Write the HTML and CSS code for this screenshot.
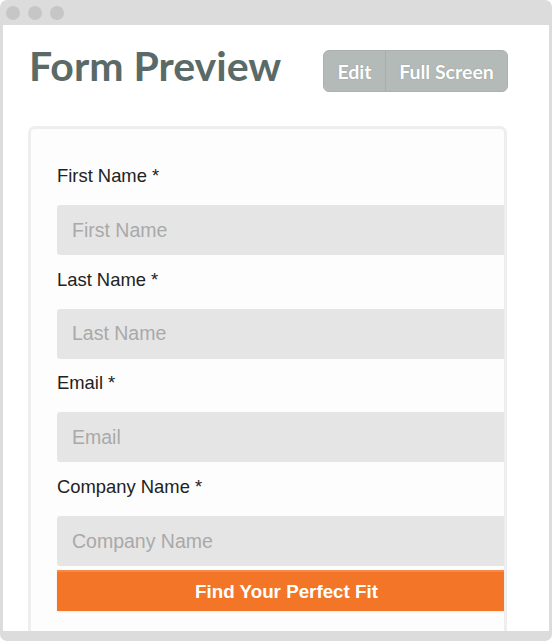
FILE: index.html
```html
<!DOCTYPE html>
<html>
<head>
<meta charset="utf-8">
<link rel="stylesheet" href="styles.css">
</head>
<body>
<div class="window">
  <div class="titlebar">
    <span class="dot"></span><span class="dot"></span><span class="dot"></span>
  </div>
  <div class="viewport">
    <div class="header">
      <h1 class="title">Form Preview</h1>
      <div class="btn-group">
        <span class="btn btn-edit">Edit</span>
        <span class="btn btn-full">Full Screen</span>
      </div>
    </div>
    <div class="card">
      <div class="field">
        <label class="label">First Name *</label>
        <div class="input">First Name</div>
      </div>
      <div class="field">
        <label class="label">Last Name *</label>
        <div class="input">Last Name</div>
      </div>
      <div class="field">
        <label class="label">Email *</label>
        <div class="input">Email</div>
      </div>
      <div class="field">
        <label class="label">Company Name *</label>
        <div class="input">Company Name</div>
      </div>
      <div class="submit">Find Your Perfect Fit</div>
    </div>
  </div>
</div>
</body>
</html>
```

FILE: styles.css
```css
html, body {
  margin: 0;
  padding: 0;
  background: #ffffff;
}

.window {
  width: 552px;
  height: 641px;
  box-sizing: border-box;
  background: #dcdcdc;
  border-radius: 7px;
  padding: 0 3px 10px 3px;
  display: flex;
  flex-direction: column;
  overflow: hidden;
}

.titlebar {
  height: 25px;
  display: flex;
  align-items: center;
  gap: 8px;
  padding-left: 3px;
  flex: none;
}

.dot {
  width: 14px;
  height: 14px;
  border-radius: 50%;
  background: #c6c6c6;
}

.viewport {
  flex: 1;
  background: #ffffff;
  overflow: hidden;
  padding: 0 42px 0 25px;
}

.header {
  height: 101px;
  display: flex;
  justify-content: space-between;
  align-items: flex-start;
  padding: 0 0 0 1px;
  margin-right: -1px;
}

.title {
  margin: 16px 0 0 0;
  font-family: Lato, "Open Sans", sans-serif;
  font-weight: 700;
  font-size: 41px;
  line-height: 49px;
  color: #5a6a67;
}

.btn-group {
  margin-top: 25px;
  display: flex;
  height: 42px;
  box-sizing: border-box;
  border: 1px solid #aab1af;
  border-radius: 6px;
  background: #b3bab8;
  overflow: hidden;
}

.btn {
  display: flex;
  align-items: center;
  justify-content: center;
  font-family: Lato, sans-serif;
  font-weight: 700;
  font-size: 19.5px;
  color: #ffffff;
  text-shadow: 0 0 1px rgba(90, 100, 98, 0.5);
}

.btn-edit {
  width: 61px;
  border-right: 1px solid #a6adab;
}

.btn-full {
  width: 121px;
}

.card {
  border: 3px solid #eeeeee;
  border-radius: 7px;
  background: #fdfdfd;
  padding: 37px 0 40px 26px;
  overflow: hidden;
}

.field + .field {
  margin-top: 14.7px;
}

.label {
  display: block;
  font-family: "Liberation Sans", Arial, sans-serif;
  font-size: 18.4px;
  line-height: 20px;
  color: #222222;
  margin-bottom: 19px;
}

.input {
  height: 50px;
  box-sizing: border-box;
  margin-right: -12px;
  background: #e5e5e5;
  border-radius: 3px;
  padding-left: 15px;
  display: flex;
  align-items: center;
  font-family: "Liberation Sans", Arial, sans-serif;
  font-size: 19.5px;
  color: #a9a9a9;
}

.submit {
  margin-top: 4px;
  margin-right: -12px;
  height: 41px;
  box-sizing: border-box;
  background: #f37527;
  border-top: 2px solid #f5884a;
  box-shadow: 0 1px 2px rgba(0, 0, 0, 0.08);
  display: flex;
  align-items: center;
  justify-content: center;
  font-family: "Liberation Sans", Arial, sans-serif;
  font-weight: 700;
  font-size: 18.8px;
  color: #ffffff;
}
```
